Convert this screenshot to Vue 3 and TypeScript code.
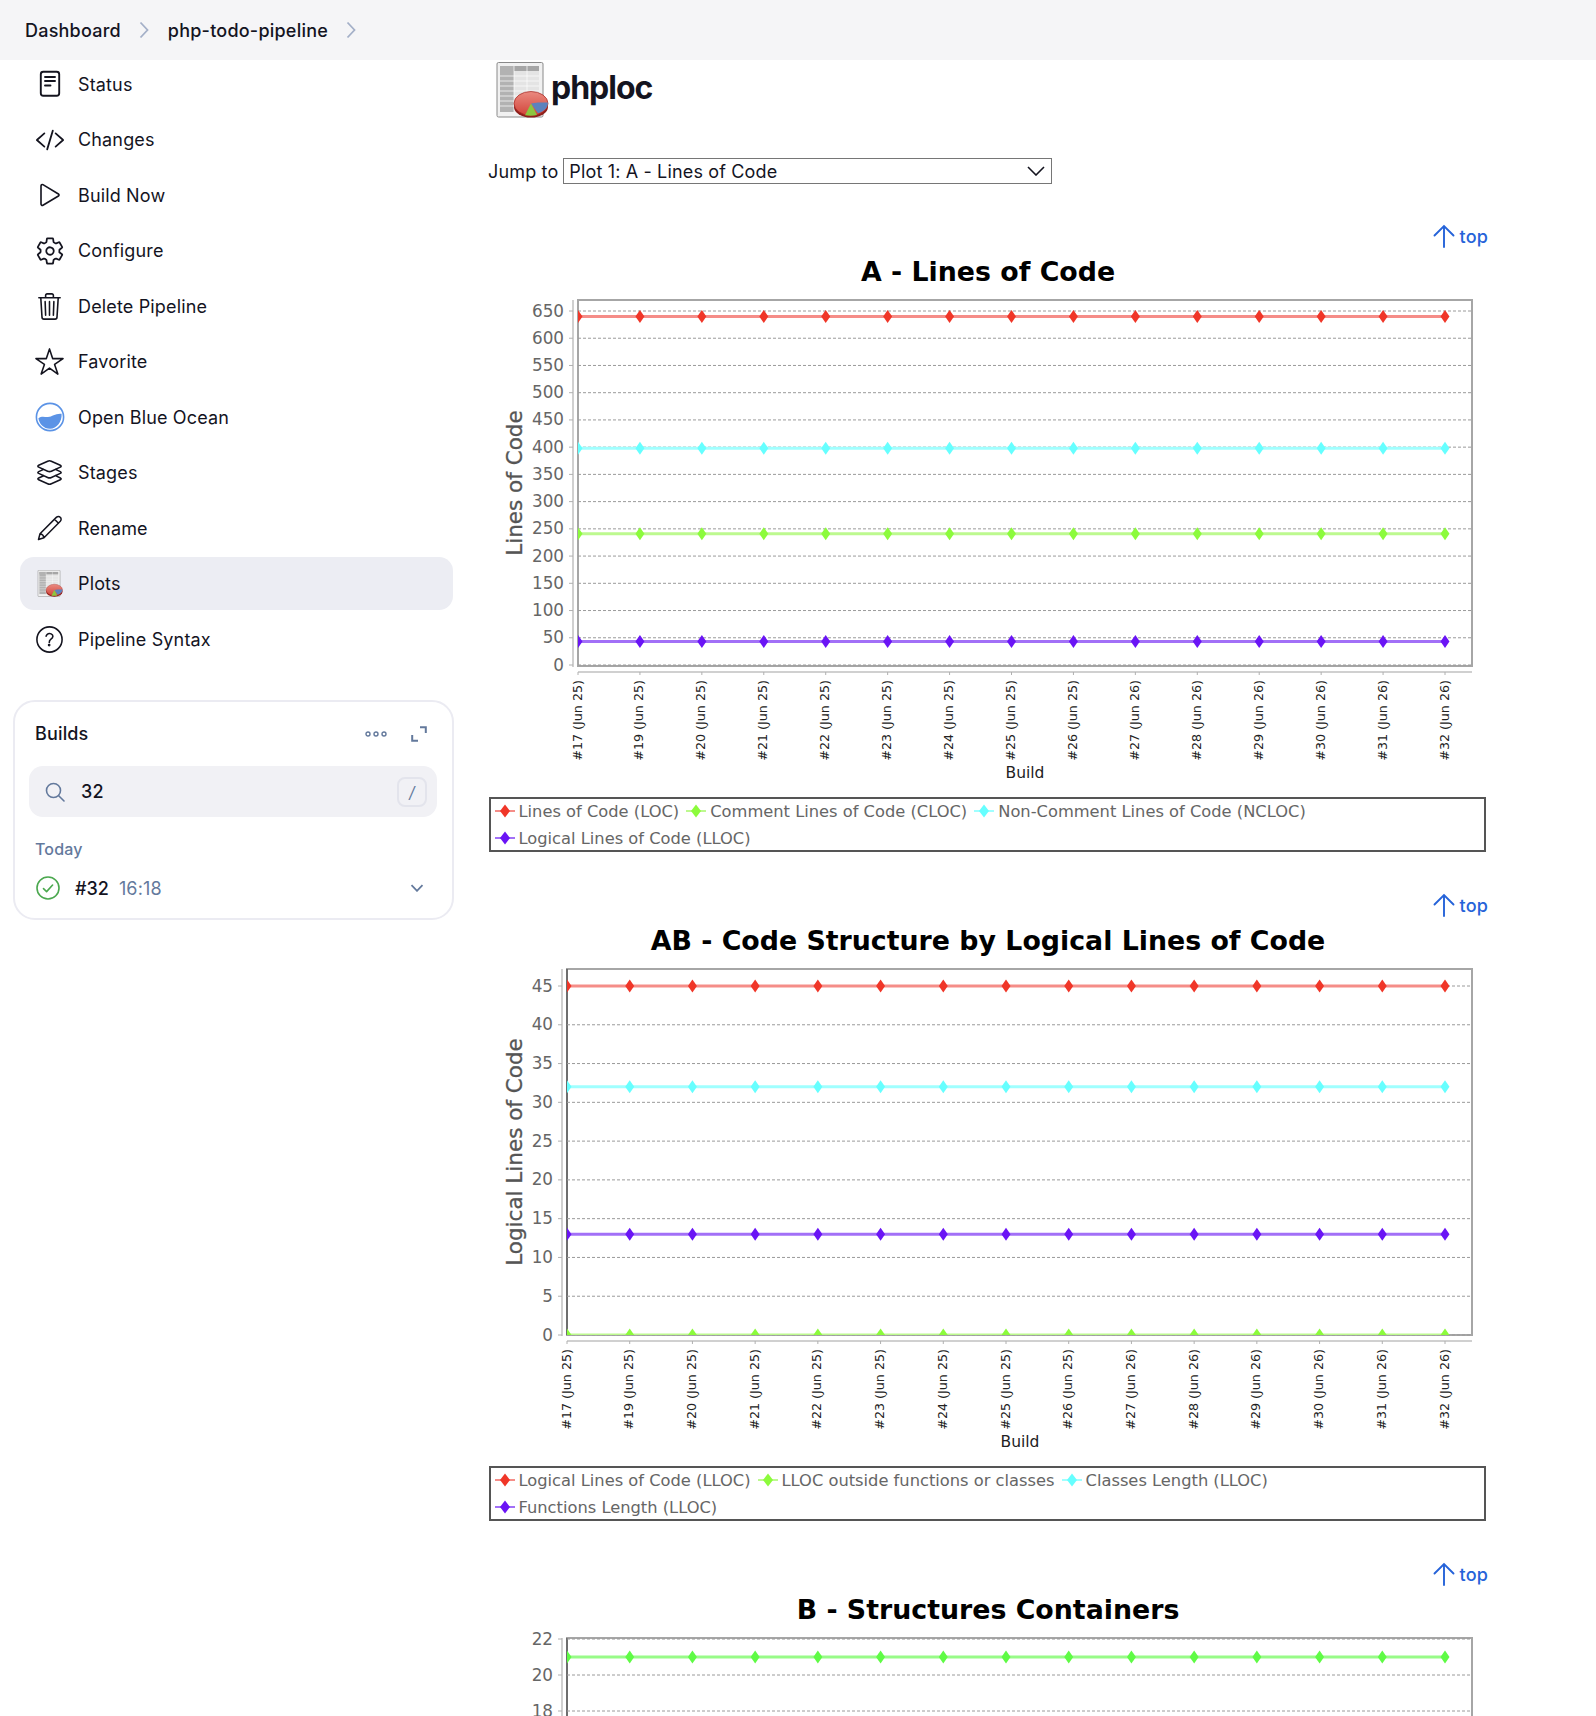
<script setup lang="ts">
import { computed } from "vue";

interface Series {
  color: string;
  line: string;
  value: number;
}

interface LegendItem {
  label: string;
  color: string;
  line: string;
}

interface Chart {
  id: string;
  title: string;
  yLabel: string;
  left: number;
  max: number;
  min: number;
  step: number;
  maxY: number;
  zeroY: number;
  buildX: number;
  height: number;
  edge: string;
  showBuilds: boolean;
  series: Series[];
  legend: LegendItem[];
}

const RED = { color: "#f03628", line: "#f58d88" };
const GREEN = { color: "#8cfb3c", line: "#bdf98f" };
const CYAN = { color: "#66ffff", line: "#a0ffff" };
const PURPLE = { color: "#6a14f5", line: "#a270f7" };
const LIME = { color: "#5ffb45", line: "#98fb88" };

const PLOT_TOP = 45;
const PLOT_BOTTOM = 411;
const PLOT_RIGHT = 984;
const LAST_X = 957;

const navItems = [
  { label: "Status", icon: "status" },
  { label: "Changes", icon: "changes" },
  { label: "Build Now", icon: "play" },
  { label: "Configure", icon: "gear" },
  { label: "Delete Pipeline", icon: "trash" },
  { label: "Favorite", icon: "star" },
  { label: "Open Blue Ocean", icon: "ocean" },
  { label: "Stages", icon: "layers" },
  { label: "Rename", icon: "pencil" },
  { label: "Plots", icon: "plots" },
  { label: "Pipeline Syntax", icon: "help" },
];

const builds = [
  "#17 (Jun 25)", "#19 (Jun 25)", "#20 (Jun 25)", "#21 (Jun 25)", "#22 (Jun 25)",
  "#23 (Jun 25)", "#24 (Jun 25)", "#25 (Jun 25)", "#26 (Jun 25)", "#27 (Jun 26)",
  "#28 (Jun 26)", "#29 (Jun 26)", "#30 (Jun 26)", "#31 (Jun 26)", "#32 (Jun 26)",
];

const charts: Chart[] = [
  {
    id: "a",
    title: "A - Lines of Code",
    yLabel: "Lines of Code",
    left: 90,
    max: 650,
    min: 0,
    step: 50,
    maxY: 56,
    zeroY: 410,
    buildX: 537,
    height: 542,
    edge: "#a6a6a6",
    showBuilds: true,
    series: [
      { ...RED, value: 640 },
      { ...CYAN, value: 398 },
      { ...GREEN, value: 241 },
      { ...PURPLE, value: 43 },
    ],
    legend: [
      { label: "Lines of Code (LOC)", ...RED },
      { label: "Comment Lines of Code (CLOC)", ...GREEN },
      { label: "Non-Comment Lines of Code (NCLOC)", ...CYAN },
      { label: "Logical Lines of Code (LLOC)", ...PURPLE },
    ],
  },
  {
    id: "ab",
    title: "AB - Code Structure by Logical Lines of Code",
    yLabel: "Logical Lines of Code",
    left: 79,
    max: 45,
    min: 0,
    step: 5,
    maxY: 62,
    zeroY: 411,
    buildX: 532,
    height: 542,
    edge: "#6e6e6e",
    showBuilds: true,
    series: [
      { ...RED, value: 45 },
      { ...CYAN, value: 32 },
      { ...PURPLE, value: 13 },
      { ...GREEN, value: 0 },
    ],
    legend: [
      { label: "Logical Lines of Code (LLOC)", ...RED },
      { label: "LLOC outside functions or classes", ...GREEN },
      { label: "Classes Length (LLOC)", ...CYAN },
      { label: "Functions Length (LLOC)", ...PURPLE },
    ],
  },
  {
    // only the top of this one fits in the window
    id: "b",
    title: "B - Structures Containers",
    yLabel: "",
    left: 79,
    max: 22,
    min: 18,
    step: 2,
    maxY: 46,
    zeroY: 442,
    buildX: 532,
    height: 123,
    edge: "#6e6e6e",
    showBuilds: false,
    series: [{ ...LIME, value: 21 }],
    legend: [],
  },
];

const view = computed(() =>
  charts.map((c) => {
    const scale = (c.zeroY - c.maxY) / c.max;
    const toY = (v: number) => c.zeroY - v * scale;
    const dx = (LAST_X - c.left) / (builds.length - 1);
    const xs = builds.map((_, i) => c.left + i * dx);
    const ticks: { label: number; y: number }[] = [];
    for (let v = c.max; v >= c.min; v -= c.step) {
      ticks.push({ label: v, y: toY(v) });
    }
    return {
      ...c,
      xs,
      ticks,
      lines: c.series.map((s) => ({ ...s, y: toY(s.value) })),
    };
  })
);

const diamond = (x: number, y: number) =>
  `${x - 4.5},${y} ${x},${y - 6.5} ${x + 4.5},${y} ${x},${y + 6.5}`;
</script>

<template>
  <div class="page">
    <header class="crumbs">
      <span>Dashboard</span>
      <svg class="crumb-arrow" viewBox="0 0 10 18"><path d="M1.5 1.5 8.5 9l-7 7.5" /></svg>
      <span>php-todo-pipeline</span>
      <svg class="crumb-arrow" viewBox="0 0 10 18"><path d="M1.5 1.5 8.5 9l-7 7.5" /></svg>
    </header>

    <div class="body">
      <aside class="sidebar">
        <nav class="nav">
          <a
            v-for="item in navItems"
            :key="item.label"
            class="nav-item"
            :class="{ active: item.icon === 'plots' }"
          >
            <span class="nav-icon">
              <svg v-if="item.icon === 'status'" viewBox="0 0 24 28" width="24" height="28" class="line2">
                <rect x="2.8" y="1.8" width="18.4" height="24" rx="2.5" />
                <path d="M7 7h10M7 11h10M7 15.5h5.5" />
              </svg>
              <svg v-else-if="item.icon === 'changes'" viewBox="0 0 512 512" width="30" height="30" class="line32">
                <path d="M160 368L32 256l128-112M352 368l128-112-128-112M304 96l-96 320" />
              </svg>
              <svg v-else-if="item.icon === 'play'" viewBox="0 0 512 512" width="32" height="32" class="line28">
                <path d="M112 111v290c0 17.44 17 28.52 31 20.16l247.9-148.37c12.12-7.25 12.12-26.33 0-33.58L143 90.84c-14-8.36-31 2.72-31 20.16z" />
              </svg>
              <svg v-else-if="item.icon === 'gear'" viewBox="0 0 512 512" width="30" height="30" class="line32">
                <path d="M262.29 192.31a64 64 0 1057.4 57.4 64.13 64.13 0 00-57.4-57.4zM416.39 256a154.34 154.34 0 01-1.53 20.79l45.21 35.46a10.81 10.81 0 012.45 13.75l-42.77 74a10.81 10.81 0 01-13.14 4.59l-44.9-18.08a16.11 16.11 0 00-15.17 1.75A164.48 164.48 0 01325 400.8a15.94 15.94 0 00-8.82 12.14l-6.73 47.89a11.08 11.08 0 01-10.68 9.17h-85.54a11.11 11.11 0 01-10.69-8.87l-6.72-47.82a16.07 16.07 0 00-9-12.22 155.3 155.3 0 01-21.46-12.57 16 16 0 00-15.11-1.71l-44.89 18.07a10.81 10.81 0 01-13.14-4.58l-42.77-74a10.8 10.8 0 012.45-13.75l38.21-30a16.05 16.05 0 006-14.08c-.36-4.17-.58-8.33-.58-12.5s.21-8.27.58-12.35a16 16 0 00-6.07-13.94l-38.19-30A10.81 10.81 0 0149.48 186l42.77-74a10.81 10.81 0 0113.14-4.59l44.9 18.08a16.11 16.11 0 0015.17-1.75A164.48 164.48 0 01187 111.2a15.94 15.94 0 008.82-12.14l6.73-47.89A11.08 11.08 0 01213.23 42h85.54a11.11 11.11 0 0110.69 8.87l6.72 47.82a16.07 16.07 0 009 12.22 155.3 155.3 0 0121.46 12.57 16 16 0 0015.11 1.71l44.89-18.07a10.81 10.81 0 0113.14 4.58l42.77 74a10.8 10.8 0 01-2.45 13.75l-38.21 30a16.05 16.05 0 00-6.05 14.08c.33 4.14.55 8.3.55 12.47z" />
              </svg>
              <svg v-else-if="item.icon === 'trash'" viewBox="0 0 512 512" width="31" height="31" class="line28">
                <path d="M112 112l20 320c.95 18.49 14.4 32 32 32h184c17.67 0 30.87-13.51 32-32l20-320M80 112h352M192 112V72a23.93 23.93 0 0124-24h80a23.93 23.93 0 0124 24v40M256 176v224M184 176l8 224M328 176l-8 224" />
              </svg>
              <svg v-else-if="item.icon === 'star'" viewBox="0 0 512 512" width="31" height="31" class="line28">
                <path d="M480 208H308L256 48l-52 160H32l140 96-54 160 138-100 138 100-54-160z" />
              </svg>
              <svg v-else-if="item.icon === 'ocean'" viewBox="0 0 30 30" width="30" height="30">
                <circle cx="15" cy="15" r="13.6" fill="#fff" stroke="#5b93e6" stroke-width="1.6" />
                <path d="M3.4 16.2c3.4-2.4 6.2-1 9.6-1.2 4.4-.3 7.4-3.8 13.6-3.2.5 8-4.8 15-11.6 15-6.400 0-11-5.400-11.600-10.600z" fill="#5b93e6" />
              </svg>
              <svg v-else-if="item.icon === 'layers'" viewBox="0 0 512 512" width="31" height="31" class="line28">
                <path d="M434.8 137.65l-149.36-68.1c-16.19-7.4-42.69-7.4-58.88 0L77.3 137.65c-17.6 8-17.6 21.09 0 29.09l148 67.5c16.89 7.7 44.69 7.7 61.58 0l148-67.5c17.52-8 17.52-21.1-.08-29.09zM160 308.52l-82.7 37.11c-17.6 8-17.6 21.1 0 29.1l148 67.5c16.89 7.69 44.69 7.69 61.58 0l148-67.5c17.6-8 17.6-21.1 0-29.1l-79.94-38.47M160 204.48l-82.8 37.16c-17.6 8-17.6 21.1 0 29.1l148 67.49c16.89 7.7 44.69 7.7 61.58 0l148-67.49c17.7-8 17.7-21.1.1-29.1L352 204.48" />
              </svg>
              <svg v-else-if="item.icon === 'pencil'" viewBox="0 0 28 28" width="28" height="28" class="pen">
                <path d="M2.5 25.500 4 19.800 20.300 3.400c1.300-1.300 3-1.300 4 0 1.100 1 1.100 2.600 0 3.800L8 23.700zM4 19.800c2 .3 3.600 1.800 4 3.900M18.500 5.200l4 4" />
              </svg>
              <svg v-else-if="item.icon === 'plots'" viewBox="0 0 54 56" width="26" height="27">
                <use href="#plot-icon" />
              </svg>
              <svg v-else viewBox="0 0 512 512" width="31" height="31" class="line28">
                <path d="M256 48a208 208 0 10208 208A208 208 0 00256 48z" />
                <path d="M200 202.29s.84-17.5 19.57-32.57C230.68 160.77 244 158.18 256 158c10.93-.14 20.69 1.67 26.53 4.45 10 4.76 29.47 16.38 29.47 41.09 0 26-17 37.81-36.37 50.8S252 287.42 252 304" />
                <circle cx="250" cy="348" r="10" />
              </svg>
            </span>
            <span>{{ item.label }}</span>
          </a>
        </nav>

        <section class="builds">
          <div class="builds-head">
            <span class="builds-title">Builds</span>
            <svg class="dots" viewBox="0 0 22 6" width="22" height="6">
              <circle cx="3" cy="3" r="2" />
              <circle cx="11" cy="3" r="2" />
              <circle cx="19" cy="3" r="2" />
            </svg>
            <svg class="expand" viewBox="0 0 16 16" width="16" height="16">
              <path d="M9 1.200h5.800V7M7 14.800H1.200V9" />
            </svg>
          </div>
          <div class="search">
            <svg class="search-icon" viewBox="0 0 20 20" width="20" height="20">
              <circle cx="8.500" cy="8.500" r="7" />
              <path d="m13.700 13.700 5.300 5.300" />
            </svg>
            <span class="search-value">32</span>
            <kbd class="slash">/</kbd>
          </div>
          <div class="today">Today</div>
          <div class="build-row">
            <svg class="ok" viewBox="0 0 24 24" width="24" height="24">
              <circle cx="12" cy="12" r="11" />
              <path d="m7.500 12.600 3.100 3 6-6.600" />
            </svg>
            <span class="build-no">#32</span>
            <span class="build-time">16:18</span>
            <svg class="chevron" viewBox="0 0 14 8" width="14" height="8">
              <path d="m1.500 1.200 5.500 5.600 5.500-5.600" />
            </svg>
          </div>
        </section>
      </aside>

      <main class="main">
        <div class="heading">
          <svg class="plot-icon" viewBox="0 0 54 56" width="54" height="56">
            <defs>
              <linearGradient id="pie-red" x1="0" y1="0" x2="0" y2="1">
                <stop offset="0" stop-color="#ea8a80" />
                <stop offset="1" stop-color="#d2443a" />
              </linearGradient>
              <symbol id="plot-icon" viewBox="0 0 54 56">
                <rect x="2" y="0.500" width="46" height="54.500" rx="1.500" fill="#f1f1f1" stroke="#8a8a8a" />
                <rect x="5" y="4" width="39" height="46" fill="#e4e4e4" />
                <rect x="5" y="4" width="39" height="5" fill="#a6a6a6" />
                <rect x="5" y="4" width="14" height="46" fill="#b2b2b2" />
                <path d="M5 14h39M5 19h39M5 24h39M5 29h39M5 34h39M5 39h39M5 44h39M19 4v46M32 4v46" stroke="#fff" stroke-width=".7" fill="none" />
                <ellipse cx="36" cy="45" rx="17" ry="10.500" fill="#8e1f1b" />
                <ellipse cx="36" cy="41.500" rx="17" ry="12" fill="url(#pie-red)" stroke="#a3231e" stroke-width=".7" />
                <path d="M36 41.500 43 40.500h9.800c.6 4.500-3.600 9-9.800 10.800z" fill="#5d82bd" />
                <path d="M36 41.500l6 11.600c-3.500.7-8.500.7-12 .1z" fill="#8cc63f" />
              </symbol>
            </defs>
            <use href="#plot-icon" />
          </svg>
          <h1>phploc</h1>
        </div>

        <div class="jump">
          <label for="jump-select">Jump to</label>
          <div class="select-wrap">
            <select id="jump-select">
              <option>Plot 1: A - Lines of Code</option>
            </select>
            <svg class="select-arrow" viewBox="0 0 18 10" width="18" height="10">
              <path d="m1 1 8 8 8-8" />
            </svg>
          </div>
        </div>

        <section v-for="chart in view" :key="chart.id" class="plot">
          <div class="top-row">
            <a class="top-link">
              <svg viewBox="0 0 22 24" width="22" height="24">
                <path d="M11 23V2M1.500 11.500 11 2l9.500 9.500" />
              </svg>
              top
            </a>
          </div>
          <svg class="chart" :viewBox="`0 0 1000 ${chart.height}`" width="1000" :height="chart.height">
            <defs>
              <clipPath :id="`clip-${chart.id}`">
                <rect :x="chart.left" :y="PLOT_TOP" :width="PLOT_RIGHT - chart.left" :height="PLOT_BOTTOM - PLOT_TOP" />
              </clipPath>
            </defs>
            <text class="chart-title" x="500" y="26" text-anchor="middle">{{ chart.title }}</text>
            <text
              v-if="chart.yLabel"
              class="y-label"
              x="33.5"
              y="228"
              text-anchor="middle"
              transform="rotate(-90 33.5 228)"
            >{{ chart.yLabel }}</text>

            <path class="gutter" :d="`M${chart.left - 5} ${PLOT_TOP}V${PLOT_BOTTOM + 1}M${chart.left} ${PLOT_BOTTOM + 6}H${PLOT_RIGHT}`" />

            <rect
              class="frame"
              :x="chart.left"
              :y="PLOT_TOP"
              :width="PLOT_RIGHT - chart.left"
              :height="PLOT_BOTTOM - PLOT_TOP"
            />
            <line :x1="chart.left" :x2="chart.left" :y1="PLOT_TOP" :y2="PLOT_BOTTOM" :stroke="chart.edge" stroke-width="2" />

            <g v-for="t in chart.ticks" :key="t.label">
              <line class="tick" :x1="chart.left - 9" :x2="chart.left - 5" :y1="t.y" :y2="t.y" />
              <line class="grid" :x1="chart.left" :x2="PLOT_RIGHT" :y1="t.y" :y2="t.y" />
              <text class="y-tick" :x="chart.left - 14" :y="t.y + 5.5" text-anchor="end">{{ t.label }}</text>
            </g>

            <g :clip-path="`url(#clip-${chart.id})`">
              <g v-for="s in chart.lines" :key="s.color">
                <line :x1="chart.left" :x2="LAST_X" :y1="s.y" :y2="s.y" :stroke="s.line" stroke-width="3" />
                <polygon v-for="x in chart.xs" :key="x" :points="diamond(x, s.y)" :fill="s.color" />
              </g>
            </g>

            <template v-if="chart.showBuilds">
              <g v-for="(build, i) in builds" :key="build">
                <line class="tick" :x1="chart.xs[i]" :x2="chart.xs[i]" :y1="PLOT_BOTTOM + 6" :y2="PLOT_BOTTOM + 9" />
                <text
                  class="x-tick"
                  :x="chart.xs[i] + 3.5"
                  y="425"
                  text-anchor="end"
                  :transform="`rotate(-90 ${chart.xs[i] + 3.5} 425)`"
                >{{ build }}</text>
              </g>
              <text class="x-label" :x="chart.buildX" y="523" text-anchor="middle">Build</text>
            </template>
          </svg>
          <div v-if="chart.legend.length" class="legend">
            <span v-for="item in chart.legend" :key="item.label" class="legend-item">
              <svg viewBox="0 0 20 14" width="20" height="14">
                <line x1="0" x2="20" y1="7" y2="7" :stroke="item.line" stroke-width="2" />
                <polygon points="10,0.5 15,7 10,13.5 5,7" :fill="item.color" />
              </svg>
              {{ item.label }}
            </span>
          </div>
        </section>
      </main>
    </div>
  </div>
</template>

<style scoped>
.page {
  height: 1716px;
  overflow: hidden;
  background: #fff;
  font-family: Inter, "Liberation Sans", sans-serif;
  font-size: 18px;
  letter-spacing: 0.15px;
  color: #14141f;
}

.crumbs {
  position: relative;
  z-index: 1;
  display: flex;
  align-items: center;
  height: 60px;
  padding-left: 25px;
  background: #f5f5f7;
  font-weight: 500;
  letter-spacing: 0.22px;
}

.crumb-arrow {
  width: 10px;
  height: 18px;
  margin: 0 19px 0 18px;
  fill: none;
  stroke: #a4b0c8;
  stroke-width: 1.8;
}

.body {
  display: flex;
}

.sidebar {
  flex: none;
  width: 488px;
  box-sizing: border-box;
  padding-left: 13px;
}

.nav {
  display: flex;
  flex-direction: column;
  gap: 2.5px;
  margin: -2.5px 0 34.5px 7px;
  width: 433px;
}

.nav-item {
  display: flex;
  align-items: center;
  height: 53px;
  border-radius: 14px;
  font-weight: 430;
}

.nav-item.active {
  background: #ecedf3;
}

.nav-icon {
  display: flex;
  align-items: center;
  justify-content: center;
  width: 58px;
  padding-left: 1px;
  box-sizing: border-box;
  height: 32px;
  flex: none;
}

.line2,
.line28,
.line32,
.pen {
  fill: none;
  stroke: #14141f;
  stroke-linecap: round;
  stroke-linejoin: round;
}

.line2 {
  stroke-width: 1.9;
}

.pen {
  stroke-width: 1.5;
}

.line28 {
  stroke-width: 26;
}

.line32 {
  stroke-width: 30;
}

.builds {
  box-sizing: border-box;
  width: 441px;
  height: 220px;
  padding: 0 15px 0 14px;
  border: 2px solid #ebebf2;
  border-radius: 22px;
}

.builds-head {
  display: flex;
  align-items: center;
  box-sizing: border-box;
  height: 64px;
  padding: 0 10px 1px 6px;
}

.builds-title {
  flex: 1;
  font-weight: 500;
}

.dots {
  margin-right: 24px;
  fill: none;
  stroke: #63799c;
  stroke-width: 1.4;
}

.expand {
  fill: none;
  stroke: #63799c;
  stroke-width: 2;
}

.search {
  display: flex;
  align-items: center;
  height: 51px;
  padding: 0 10px 0 16px;
  background: #f1f1f5;
  border-radius: 14px;
}

.search-icon {
  fill: none;
  stroke: #63799c;
  stroke-width: 1.6;
  stroke-linecap: round;
}

.search-value {
  flex: 1;
  margin-left: 16px;
  font-weight: 500;
}

.slash {
  display: flex;
  align-items: center;
  justify-content: center;
  box-sizing: border-box;
  width: 30px;
  height: 30px;
  border: 2px solid #e3e4ec;
  border-radius: 8px;
  color: #63799c;
  font-family: inherit;
  font-size: 16px;
  font-style: italic;
}

.today {
  margin: 22px 0 0 6px;
  color: #63799c;
  font-size: 16px;
  font-weight: 500;
  line-height: 20px;
}

.build-row {
  display: flex;
  align-items: center;
  height: 46px;
  margin-top: 6px;
  padding: 0 13px 0 7px;
}

.ok {
  fill: none;
  stroke: #4ba84f;
  stroke-width: 1.6;
  stroke-linecap: round;
  stroke-linejoin: round;
}

.build-no {
  margin-left: 15px;
  font-weight: 500;
  letter-spacing: 0;
}

.build-time {
  flex: 1;
  margin-left: 10px;
  color: #63799c;
}

.chevron {
  fill: none;
  stroke: #63799c;
  stroke-width: 1.8;
}

.main {
  flex: 1;
  padding-top: 2px;
  width: 1000px;
}

.heading {
  display: flex;
  align-items: flex-start;
  height: 58px;
  padding-left: 7px;
}

.heading h1 {
  margin: 4px 0 0 2px;
  font-size: 32px;
  font-weight: 700;
  line-height: 44px;
  letter-spacing: -1px;
}

.jump {
  display: flex;
  align-items: center;
  gap: 5px;
  margin: 38px 0 41px;
}

.select-wrap {
  position: relative;
}

.select-wrap select {
  display: block;
  appearance: none;
  box-sizing: border-box;
  width: 489px;
  height: 26px;
  padding: 0 5px;
  border: 1.5px solid #767676;
  border-radius: 0;
  background: #fff;
  color: #14141f;
  font: 400 18px Inter, "Liberation Sans", sans-serif;
  letter-spacing: 0.15px;
}

.select-arrow {
  position: absolute;
  top: 8px;
  right: 7px;
  fill: none;
  stroke: #14141f;
  stroke-width: 1.6;
}

.plot {
  width: 1000px;
  height: 669px;
}

.top-row {
  display: flex;
  justify-content: flex-end;
  align-items: center;
  box-sizing: border-box;
  height: 30px;
  padding-bottom: 8px;
}

.top-link {
  display: flex;
  align-items: center;
  gap: 5px;
  color: #2563d9;
  font-weight: 550;
}

.top-link svg {
  fill: none;
  stroke: #2563d9;
  stroke-width: 1.9;
  stroke-linecap: round;
}

.chart {
  display: block;
  font-family: "DejaVu Sans", sans-serif;
  letter-spacing: 0;
}

.chart-title {
  font-size: 26.8px;
  font-weight: 700;
  fill: #000;
}

.y-label {
  font-size: 21.5px;
  fill: #555;
  stroke: #555;
  stroke-width: 0.3;
}

.y-tick {
  font-size: 16.8px;
  fill: #666;
}

.x-tick {
  font-size: 12.7px;
  fill: #222;
}

.x-label {
  font-size: 15.5px;
  fill: #222;
}

.grid {
  stroke: #9a9a9a;
  stroke-width: 1;
  stroke-dasharray: 3 2;
}

.gutter {
  fill: none;
  stroke: #d0d0d0;
  stroke-width: 2;
}

.tick {
  stroke: #b0b0b0;
  stroke-width: 1;
}

.frame {
  fill: none;
  stroke: #a6a6a6;
  stroke-width: 2;
}

.legend {
  display: flex;
  flex-wrap: wrap;
  align-content: center;
  gap: 4px 7px;
  box-sizing: border-box;
  width: 997px;
  height: 55px;
  margin-left: 1px;
  padding: 0 3.5px;
  border: 2px solid #555;
  font-family: "DejaVu Sans", sans-serif;
  font-size: 16.3px;
  letter-spacing: 0;
  color: #666;
}

.legend-item {
  display: flex;
  align-items: center;
  gap: 4px;
  line-height: 23px;
}
</style>
